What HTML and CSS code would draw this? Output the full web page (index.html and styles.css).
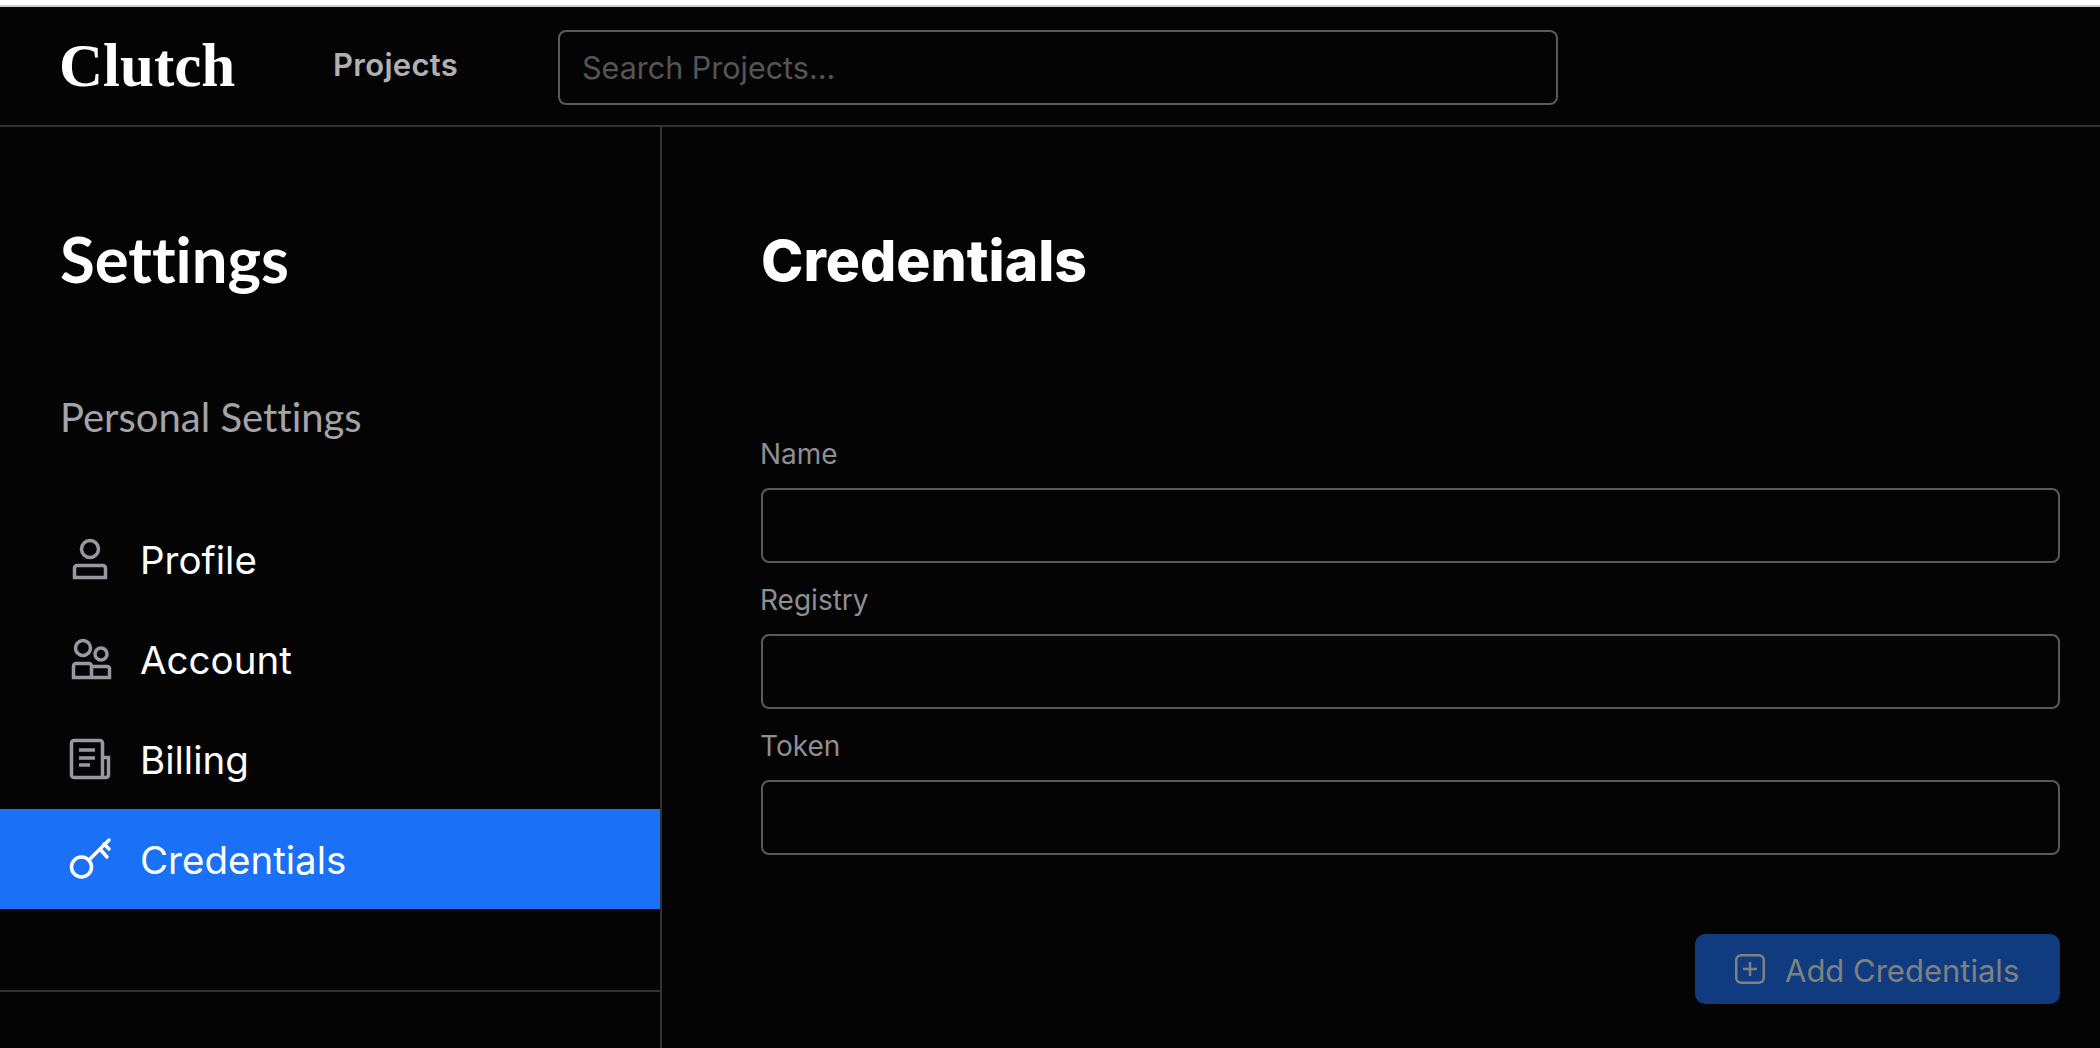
FILE: index.html
```html
<!DOCTYPE html>
<html lang="en">
<head>
<meta charset="utf-8">
<title>Clutch - Settings</title>
<link rel="stylesheet" href="styles.css">
</head>
<body>
<div class="topstrip"></div>
<header class="topbar">
  <div class="logo">Clutch</div>
  <a class="toplink">Projects</a>
  <div class="search">Search Projects...</div>
</header>
<div class="main">
  <aside class="sidebar">
    <h2 class="side-title">Settings</h2>
    <div class="side-sub">Personal Settings</div>
    <nav class="nav">
      <a class="nav-item">
        <svg class="nav-icon" viewBox="0 0 40 40" fill="none"><circle cx="20" cy="10" r="8.5"/><path d="M4.5 38.5V29a2.5 2.5 0 0 1 2.5-2.5h26a2.5 2.5 0 0 1 2.5 2.5v9.5z"/></svg>
        <span>Profile</span>
      </a>
      <a class="nav-item">
        <svg class="nav-icon" viewBox="0 0 40 40" fill="none"><circle cx="13" cy="9" r="7.5"/><circle cx="31" cy="15" r="6"/><path d="M3.5 38.5V27a2.5 2.5 0 0 1 2.500-2.500h13a2.500 2.500 0 0 1 2.500 2.500v11.500zM21.500 27.500h16a2.500 2.500 0 0 1 2 2.500v8.500h-18"/></svg>
        <span>Account</span>
      </a>
      <a class="nav-item">
        <svg class="nav-icon" viewBox="0 0 40 40" fill="none"><path d="M32 38.500H4a2.500 2.500 0 0 1-2.500-2.500V4A2.500 2.500 0 0 1 4 1.500h26A2.500 2.500 0 0 1 32.500 4v34.500M32.500 18.500h6v17.500a2.500 2.500 0 0 1-2.500 2.500h-4M9 11h16M9 19h16M9 26h11"/></svg>
        <span>Billing</span>
      </a>
      <a class="nav-item active">
        <svg class="nav-icon" viewBox="0 0 40 40" fill="none"><circle cx="11.500" cy="28" r="10"/><path d="M19 21 39 1M30 10l7 8M34 5l5 5"/></svg>
        <span>Credentials</span>
      </a>
    </nav>
    <div class="side-rule"></div>
  </aside>
  <section class="content">
    <h1 class="page-title">Credentials</h1>
    <form class="form">
      <label class="field"><span class="field-label">Name</span><span class="input"></span></label>
      <label class="field"><span class="field-label">Registry</span><span class="input"></span></label>
      <label class="field"><span class="field-label">Token</span><span class="input"></span></label>
      <div class="actions">
        <button class="add-btn" type="button">
          <svg class="add-icon" viewBox="0 0 30 30" fill="none"><rect x="1.250" y="1.250" width="27.500" height="27.500" rx="5"/><path d="M15 8v14M8 15h14"/></svg>
          <span class="add-label">Add Credentials</span>
        </button>
      </div>
    </form>
  </section>
</div>
</body>
</html>
```
FILE: styles.css
```css
* { box-sizing: border-box; }
html, body { margin: 0; height: 100%; }
body {
  background: #040404;
  color: #fff;
  font-family: Inter, "Liberation Sans", sans-serif;
  display: flex;
  flex-direction: column;
  height: 1048px;
  overflow: hidden;
}
.topstrip {
  height: 7px;
  background: #fff;
  border-bottom: 2px solid #cfcfcf;
  flex: none;
}
.topbar {
  height: 120px;
  flex: none;
  display: flex;
  align-items: center;
  border-bottom: 2px solid #333;
  padding-left: 59px;
}
.logo {
  font-family: "Liberation Serif", serif;
  font-weight: 700;
  font-size: 61px;
  width: 274px;
  line-height: 1;
  margin-top: -2px;
}
.toplink {
  font-weight: 600;
  font-size: 31px;
  letter-spacing: 0.3px;
  color: #b0b0b4;
  width: 225px;
  margin-top: -3px;
}
.search {
  width: 1000px;
  height: 75px;
  margin-top: 3px;
  border: 2px solid #5a5a5a;
  border-radius: 8px;
  padding: 0 22px;
  display: flex;
  align-items: center;
  font-size: 30.500px;
  color: #555;
}
.main { flex: 1; display: flex; min-height: 0; }
.sidebar {
  width: 662px;
  flex: none;
  border-right: 2px solid #333;
  display: flex;
  flex-direction: column;
}
.side-title {
  margin: 0;
  padding: 95px 0 0 60px;
  font-family: Lato, sans-serif;
  font-variant-ligatures: none;
  font-weight: 700;
  font-size: 63.500px;
  line-height: 74px;
}
.side-sub {
  padding: 98px 0 0 60px;
  font-family: Lato, sans-serif;
  font-variant-ligatures: none;
  font-size: 40px;
  line-height: 46px;
  color: #a4a4a8;
}
.nav { margin-top: 69px; display: flex; flex-direction: column; }
.nav-item {
  height: 100px;
  display: flex;
  align-items: center;
  gap: 30px;
  padding-left: 70px;
  font-size: 38.500px;
}
.nav-item span { margin-top: 2px; }
.nav-item.active { background: #1a70f7; }
.nav-icon {
  width: 40px;
  height: 40px;
  flex: none;
  overflow: visible;
  stroke: #98989e;
  stroke-width: 3.500;
}
.active .nav-icon { stroke: #fff; stroke-linecap: round; stroke-width: 3.500; }
.side-rule { margin-top: 81px; height: 2px; background: #333; }
.content { flex: 1; padding: 0 40px 0 99px; min-width: 0; }
.page-title {
  margin: 0;
  padding-top: 97px;
  font-size: 57px;
  line-height: 74px;
  font-weight: 800;
}
.form { display: flex; flex-direction: column; margin-top: 138px; }
.field { display: flex; flex-direction: column; height: 146px; }
.field-label {
  font-size: 28px;
  line-height: 36px;
  color: #8e8e94;
  margin: 0 0 16px -1px;
}
.input {
  display: block;
  height: 75px;
  border: 2px solid #5a5a5a;
  border-radius: 8px;
}
.actions { display: flex; justify-content: flex-end; margin-top: 60px; }
.add-btn {
  width: 365px;
  height: 70px;
  border: 0;
  border-radius: 10px;
  background: #113b7f;
  color: #808080;
  font-family: inherit;
  font-size: 31px;
  display: flex;
  align-items: center;
  gap: 20px;
  padding: 0 0 0 40px;
}
.add-label { margin-top: 2px; }
.add-icon { width: 30px; height: 30px; stroke: #808080; stroke-width: 2.500; flex: none; }
```
